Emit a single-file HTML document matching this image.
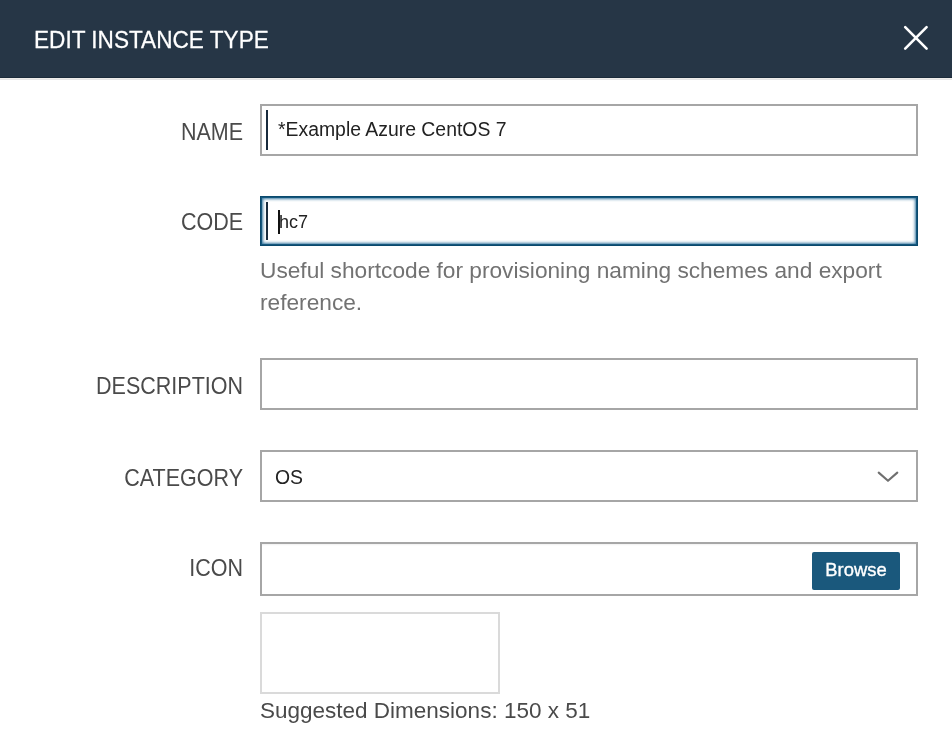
<!DOCTYPE html>
<html>
<head>
<meta charset="utf-8">
<style>
html,body{margin:0;padding:0;}
body{width:952px;height:754px;overflow:hidden;background:#fff;position:relative;font-family:"Liberation Sans",sans-serif;}
.abs{position:absolute;}
.t{will-change:transform;}
#hdr{left:0;top:0;width:952px;height:77px;background:#263646;}
#hdrline{left:0;top:77px;width:952px;height:1px;background:#1b2b3a;}
#hdrl2{left:0;top:78px;width:952px;height:1px;background:#eeedeb;}
#hdrl3{left:0;top:79px;width:952px;height:1px;background:#e6e6e6;}
#title{left:34px;top:26.5px;color:#fff;font-size:22.6px;line-height:28px;white-space:nowrap;transform:scaleY(1.06);transform-origin:0 50%;-webkit-text-stroke:0.25px #fff;}
.lbl{color:#4a4a4a;font-size:21.5px;line-height:24px;white-space:nowrap;text-align:right;width:240px;left:3px;transform:scaleY(1.08);transform-origin:0 50%;}
.box{left:260px;width:654px;border:2px solid #a6a6a6;background:#fff;}
.txt{color:#222;font-size:19.4px;line-height:22px;white-space:nowrap;}
.bar{width:2px;background:#182b3d;}
.help{left:260px;color:#727272;font-size:22.7px;line-height:32px;white-space:nowrap;}
</style>
</head>
<body>
<div id="hdr" class="abs"></div>
<div id="hdrline" class="abs"></div>
<div id="hdrl2" class="abs"></div>
<div id="hdrl3" class="abs"></div>
<div id="title" class="abs t">EDIT INSTANCE TYPE</div>
<svg class="abs" style="left:900px;top:22px" width="32" height="32" viewBox="0 0 32 32">
  <path d="M5.2 5.1 L26.6 26.7 M26.6 5.1 L5.2 26.7" stroke="#fff" stroke-width="2.6" stroke-linecap="round" fill="none"/>
</svg>

<!-- NAME -->
<div class="abs lbl t" style="top:120px">NAME</div>
<div class="abs box" style="top:104px;height:48px"></div>
<div class="abs bar" style="left:266px;top:110px;height:40px"></div>
<div class="abs txt t" style="left:278px;top:118px">*Example Azure CentOS 7</div>

<!-- CODE -->
<div class="abs lbl t" style="top:210px">CODE</div>
<div class="abs" style="left:260px;top:196px;width:656px;height:48px;border:1px solid #0a496d;box-shadow:inset 0 0 0 1px #15577d,inset 0 0 3px 2px rgba(22,98,145,0.85);background:#fff"></div>
<div class="abs bar" style="left:266px;top:202px;height:38px"></div>
<div class="abs" style="left:278px;top:210px;width:2px;height:24px;background:#111"></div>
<div class="abs txt t" style="left:279px;top:211px;font-size:18px">hc7</div>
<div class="abs help t" style="top:254px">Useful shortcode for provisioning naming schemes and export<br>reference.</div>

<!-- DESCRIPTION -->
<div class="abs lbl t" style="top:374px">DESCRIPTION</div>
<div class="abs box" style="top:358px;height:48px"></div>

<!-- CATEGORY -->
<div class="abs lbl t" style="top:466px">CATEGORY</div>
<div class="abs box" style="top:450px;height:48px"></div>
<div class="abs txt t" style="left:275px;top:466px">OS</div>
<svg class="abs" style="left:876px;top:468px" width="24" height="16" viewBox="0 0 24 16">
  <path d="M2.7 4.6 L12 12.8 L21.3 4.6" stroke="#6f6f6f" stroke-width="2.1" stroke-linecap="round" stroke-linejoin="round" fill="none"/>
</svg>

<!-- ICON -->
<div class="abs lbl t" style="top:556px">ICON</div>
<div class="abs box" style="top:542px;height:50px;box-shadow:inset 0 2px 2px -1px rgba(0,0,0,0.06)"></div>
<div class="abs" style="left:812px;top:552px;width:88px;height:38px;background:#1a587c;border-radius:2px"></div>
<div class="abs t" style="left:812px;top:558px;width:88px;text-align:center;color:#fff;font-size:18.4px;line-height:24px;-webkit-text-stroke:0.35px #fff">Browse</div>

<div class="abs" style="left:260px;top:612px;width:236px;height:78px;border:2px solid #dadada"></div>
<div class="abs t" style="left:260px;top:698px;color:#4a4a4a;font-size:22.5px;line-height:26px;white-space:nowrap">Suggested Dimensions: 150 x 51</div>
</body>
</html>
